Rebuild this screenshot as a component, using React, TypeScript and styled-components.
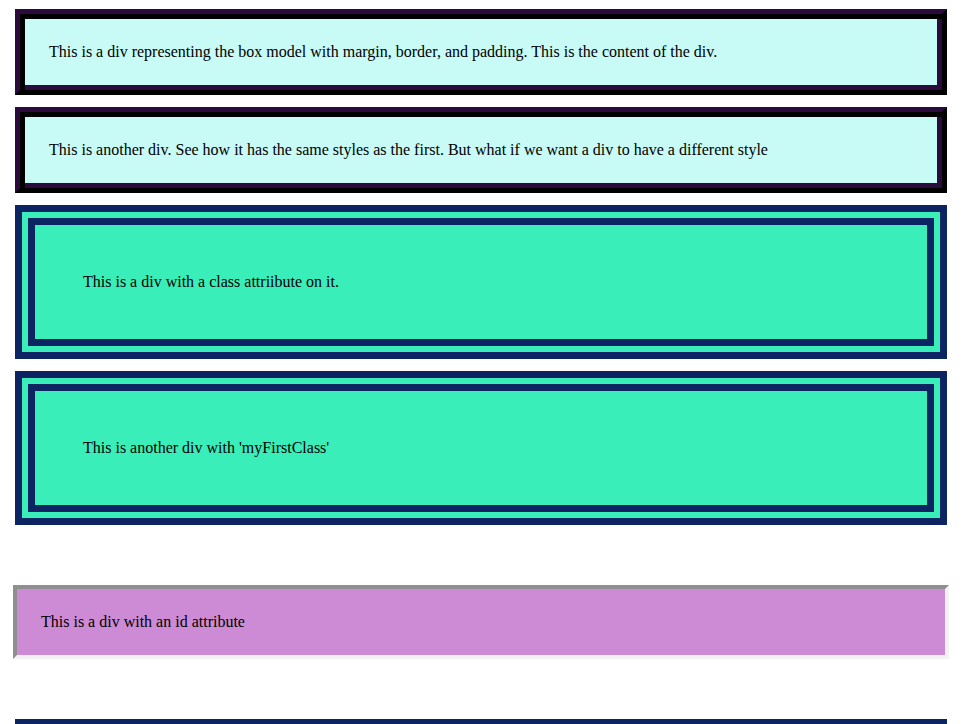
import styled, { createGlobalStyle } from 'styled-components';

const GlobalStyle = createGlobalStyle`
	body {
		margin: 0;
		background: #ffffff;
		font-family: "Liberation Serif", "Times New Roman", serif;
		font-size: 16px;
		color: #000000;
	}
`;

const Page = styled.div`
	display: flex;
	flex-direction: column;
	padding: 9px 16px 0 15px;
`;

// ridge look: outer half dark purple / black, inner half black / dark purple
const BoxModel = styled.div<{ $top?: number }>`
	margin-top: ${(p) => p.$top ?? 0}px;
	padding: 29px;
	border-style: solid;
	border-width: 5px;
	border-color: #2b0b3c #000000 #000000 #2b0b3c;
	box-shadow: inset 5px 5px 0 0 #000000, inset -5px -5px 0 0 #2b0b3c;
	background-color: #c8faf6;
`;

const FirstClass = styled.div<{ $top?: number }>`
	margin-top: ${(p) => p.$top ?? 0}px;
	min-height: 18px;
	padding: 48px;
	border: 20px double #0c2461;
	background-color: #3aeeb9;
`;

const IdBox = styled.div<{ $top?: number }>`
	margin: ${(p) => p.$top ?? 0}px -2px 0;
	padding: 24px;
	border-style: solid;
	border-width: 4px;
	border-color: #8f8f8f #f2f2f2 #f2f2f2 #8f8f8f;
	background-color: #cd8bd5;
`;

function App() {
	return (
		<>
			<GlobalStyle />
			<Page>
				<BoxModel>
					This is a div representing the box model with margin, border, and padding. This is the content of the div.
				</BoxModel>
				<BoxModel $top={12}>
					This is another div. See how it has the same styles as the first. But what if we want a div to have a different style
				</BoxModel>
				<FirstClass $top={12}>This is a div with a class attriibute on it.</FirstClass>
				<FirstClass $top={12}>This is another div with 'myFirstClass'</FirstClass>
				<IdBox $top={60}>This is a div with an id attribute</IdBox>
				<FirstClass $top={60} />
			</Page>
		</>
	);
}

export default App;
